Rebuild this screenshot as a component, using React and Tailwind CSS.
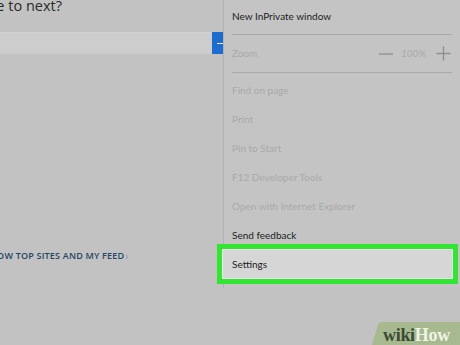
import React from "react";

const font = { fontFamily: 'Lato, "Open Sans", sans-serif' };

const MenuRow = ({ label, muted, h = "h-[29px]" }) => (
    <div className={`${h} flex items-center pl-[8px] text-[10px] ${muted ? "text-[#a9a9a9]" : "text-[#1c1c1c]"}`}>
        {label}
    </div>
);

export default function App() {
    return (
        <div
            className="relative w-[460px] h-[345px] overflow-hidden bg-[#c2c2c2] flex"
            style={font}
        >
            {/* page behind the menu */}
            <div className="w-[223px] shrink-0 overflow-hidden">
                <div
                    className="-ml-[40px] -mt-[2px] h-[34px] text-[14.5px] leading-[16px] text-[#2a2a2a] whitespace-nowrap"
                    style={{ fontFamily: '"Open Sans", sans-serif' }}
                >
                    Where to next?
                </div>
                <div className="flex h-[22px]">
                    <div className="flex-1 bg-[#cdcdcd] border-t border-[#d4d4d4]" />
                    <div className="w-[11px] bg-[#1c6dce] flex items-center justify-end">
                        <div className="w-[6px] h-px bg-[#dfe9f6]" />
                    </div>
                </div>
                <div
                    className="mt-[195px] flex items-center -ml-[15px] whitespace-nowrap text-[9px] font-semibold tracking-[0.2px] text-[#264565]"
                    style={{ fontFamily: '"Open Sans", sans-serif' }}
                >
                    SHOW TOP SITES AND MY FEED
                    <span className="ml-[1px] text-[#8da0b6] font-normal text-[11px] leading-none">›</span>
                </div>
            </div>

            {/* browser menu */}
            <div className="w-[237px] h-[288px] shrink-0 border-l border-[#b1b1b1] bg-[#c4c4c4] pt-[2px] pr-[8px]">
                <MenuRow label="New InPrivate window" />
                <div className="mt-[3px] ml-[8px] h-px bg-[#a9a9a9]" />
                <div className="h-[37px] flex items-center pl-[8px] text-[10px] text-[#a9a9a9]">
                    <span className="flex-1">Zoom</span>
                    <svg width="16" height="16" viewBox="0 0 16 16" className="mr-[7px]">
                        <path d="M1 8 H15" stroke="#8e8e8e" strokeWidth="1.3" />
                    </svg>
                    <span className="w-[26px] text-[10px] italic">100%</span>
                    <svg width="15" height="15" viewBox="0 0 15 15" className="ml-[9px] mr-[1px]">
                        <path d="M0.5 7.5 H14.5 M7.5 0.5 V14.5" stroke="#8e8e8e" strokeWidth="1.3" />
                    </svg>
                </div>
                <div className="ml-[8px] h-px bg-[#a9a9a9]" />
                <div className="mt-[3px]">
                    <MenuRow label="Find on page" muted />
                    <MenuRow label="Print" muted />
                    <MenuRow label="Pin to Start" muted />
                    <MenuRow label="F12 Developer Tools" muted />
                    <MenuRow label="Open with Internet Explorer" muted />
                    <MenuRow label="Send feedback" h="h-[23px] pt-[6px]" />
                </div>
                <div className="-ml-[7px] w-[241px] h-[40px] border-[5px] border-[#33e533] bg-[#d6d6d6] flex items-center pl-[10px] text-[10px] text-[#1c1c1c] shadow-[inset_0_0_0_1px_#ececec]">
                    Settings
                </div>
            </div>

            {/* wikiHow watermark */}
            <div className="absolute right-0 bottom-0 w-[88px] h-[23px]">
                <svg width="88" height="23" viewBox="0 0 88 23" className="absolute inset-0">
                    <path d="M0 23 L6 3 Q7 0 10 0 L88 0 L88 23 Z" fill="#a7b98e" />
                </svg>
                <div
                    className="absolute left-[11px] bottom-[1px] text-[18px] font-bold leading-none tracking-[-0.3px]"
                    style={{ fontFamily: '"Liberation Serif", serif' }}
                >
                    <span className="text-[#3b4a37]">wiki</span>
                    <span className="text-[#eef3e6]">How</span>
                </div>
            </div>
        </div>
    );
}
